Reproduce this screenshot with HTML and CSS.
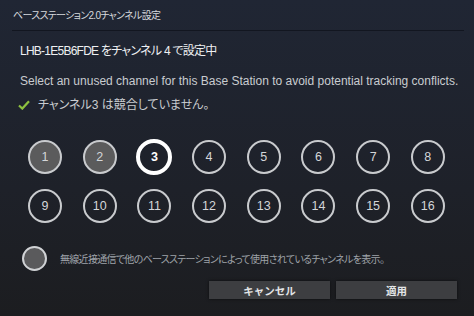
FILE: index.html
```html
<!DOCTYPE html>
<html lang="ja">

<head>
    <meta charset="UTF-8">
    <meta name="viewport" content="width=device-width, initial-scale=1.0">
    <title>ベースステーション2.0チャンネル設定</title>
    <link rel="stylesheet" href="styles.css">
</head>

<body>
    <div class="dialog">
        <!-- Title bar -->
        <div class="title">ベースステーション2.0チャンネル設定</div>

        <div class="content">
            <p class="status">LHB-1E5B6FDE をチャンネル 4 で設定中</p>
            <p class="hint">Select an unused channel for this Base Station to avoid potential tracking conflicts.</p>
            <p class="ok">
                <svg class="check" width="12" height="10" viewBox="0 0 12 10">
                    <path d="M1 5.5 L4.3 8.6 L11 1.2" fill="none" stroke="#8dc13f" stroke-width="2.2" />
                </svg>
                チャンネル3 は競合していません。
            </p>

            <!-- Channel picker -->
            <div class="channels">
                <div class="channel used">1</div>
                <div class="channel used">2</div>
                <div class="channel selected">3</div>
                <div class="channel">4</div>
                <div class="channel">5</div>
                <div class="channel">6</div>
                <div class="channel">7</div>
                <div class="channel">8</div>
                <div class="channel">9</div>
                <div class="channel">10</div>
                <div class="channel">11</div>
                <div class="channel">12</div>
                <div class="channel">13</div>
                <div class="channel">14</div>
                <div class="channel">15</div>
                <div class="channel">16</div>
            </div>

            <div class="toggle-row">
                <div class="toggle"></div>
                <span class="toggle-label">無線近接通信で他のベースステーションによって使用されているチャンネルを表示。</span>
            </div>
        </div>

        <div class="buttons">
            <button class="btn">キャンセル</button>
            <button class="btn">適用</button>
        </div>
    </div>
</body>

</html>
```

FILE: styles.css
```css
body {
    margin: 0;
    padding: 0;
    width: 474px;
    height: 316px;
    overflow: hidden;
    font-family: "Liberation Sans", "Noto Sans CJK JP", sans-serif;
    background: linear-gradient(to bottom, #202634 0%, #1e2129 60%, #1c1d20 100%);
    color: #e6e8ea;
}

.dialog {
    height: 316px;
    display: flex;
    flex-direction: column;
}

.title {
    margin: 0 10px 0 12px;
    padding: 9px 0 7px 1px;
    font-size: 10px;
    line-height: 14px;
    letter-spacing: -0.7px;
    color: #d6d9dd;
    border-bottom: 1px solid #121620;
    font-feature-settings: "palt";
}

.content {
    padding: 0 0 0 20px;
}

.content p {
    margin: 0;
    font-size: 12px;
    line-height: 16px;
    white-space: nowrap;
}

.status {
    padding-top: 12px;
    color: #eef0f2;
    letter-spacing: -0.75px;
    font-feature-settings: "palt";
}

.hint {
    padding-top: 14px;
    color: #c9ccd0;
}

.ok {
    padding-top: 8px;
    display: flex;
    align-items: center;
    gap: 8px;
    color: #c9ccd0;
    margin-left: -2px !important;
    font-feature-settings: "palt";
}

.channels {
    display: grid;
    grid-template-columns: repeat(8, 34px);
    column-gap: 20.7px;
    row-gap: 15px;
    padding: 27px 0 0 8px;
}

.channel {
    width: 34px;
    height: 34px;
    box-sizing: border-box;
    border: 2px solid #c9cbce;
    border-radius: 50%;
    display: flex;
    align-items: center;
    justify-content: center;
    font-size: 12.5px;
    color: #d4d6d9;
}

.channel.used {
    background-color: #5b5b5c;
}

.channel.selected {
    width: 36px;
    height: 36px;
    margin: -1px;
    border: 4px solid #ffffff;
    color: #ffffff;
    font-weight: bold;
}

.toggle-row {
    display: flex;
    align-items: center;
    gap: 13px;
    padding: 23px 0 0 2px;
}

.toggle {
    width: 25px;
    height: 25px;
    box-sizing: border-box;
    border: 2px solid #d0d2d5;
    border-radius: 50%;
    background-color: #5a5a5c;
}

.toggle-label {
    font-size: 10px;
    letter-spacing: -0.7px;
    color: #9fa3a9;
    font-feature-settings: "palt";
}

.buttons {
    display: flex;
    justify-content: flex-end;
    gap: 6px;
    padding: 10px 17px 0 0;
}

.btn {
    width: 121px;
    height: 18px;
    border: none;
    background-color: #3d3e41;
    color: #e3e5e7;
    font-family: "Liberation Sans", "Noto Sans CJK JP", sans-serif;
    font-size: 10.5px;
    font-weight: bold;
    box-shadow: 0 0 3px rgba(0, 0, 0, 0.6);
}
```
